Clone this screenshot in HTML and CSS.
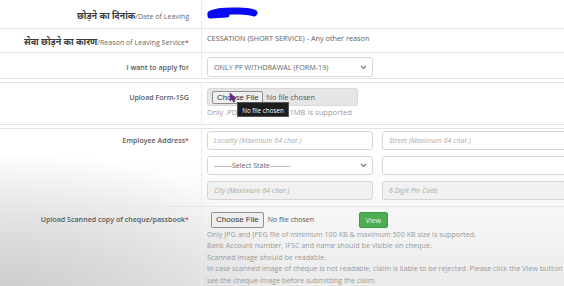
FILE: index.html
```html
<!DOCTYPE html>
<html lang="en">
<head>
<meta charset="utf-8">
<title>Claim Form</title>
<link rel="stylesheet" href="styles.css">
</head>
<body>
<div class="form">
  <div class="group g1">
    <div class="row r1">
      <div class="lbl"><span class="hi">छोड़ने का दिनांक</span><span class="en">/Date of Leaving</span></div>
      <div class="val">
        <svg class="scribble" width="52" height="14" viewBox="0 0 52 14"><path d="M4 8 C 12 4, 24 5, 32 5 C 38 5, 44 6, 47 7" stroke="#0a0af0" stroke-width="7" stroke-linecap="round" fill="none"/><path d="M3 10 L 20 9" stroke="#0a0af0" stroke-width="5" stroke-linecap="round"/></svg>
      </div>
    </div>
    <div class="row r2">
      <div class="lbl"><span class="hi">सेवा छोड़ने का कारण</span><span class="en">/Reason of Leaving Service</span><span class="req">*</span></div>
      <div class="val text">CESSATION (SHORT SERVICE) - Any other reason</div>
    </div>
    <div class="row r3">
      <div class="lbl">I want to apply for</div>
      <div class="val">
        <div class="select w1"><span>ONLY PF WITHDRAWAL (FORM-19)</span><svg class="chev" width="7" height="5" viewBox="0 0 7 5"><path d="M1 1 L3.5 3.5 L6 1" stroke="#777" stroke-width="1.1" fill="none"/></svg></div>
      </div>
    </div>
  </div>

  <div class="group g2">
    <div class="row r4">
      <div class="lbl">Upload Form-15G</div>
      <div class="val">
        <div class="filebox"><span class="fbtn small">Choose File</span><span class="fname">No file chosen</span></div>
        <div class="help h15">Only .PDF file less than 1MB is supported</div>
        <div class="tooltip">No file chosen</div>
        <svg class="cursor" width="8" height="11" viewBox="0 0 8 11"><path d="M1 1 L1 9 L3 7.2 L4.6 10.2 L6 9.5 L4.5 6.6 L7 6.4 Z" fill="#6b2d8c" stroke="#4a1d63" stroke-width="0.6"/></svg>
      </div>
    </div>
  </div>

  <div class="group g3">
    <div class="row r5">
      <div class="lbl">Employee Address<span class="req">*</span></div>
      <div class="val addr">
        <div class="input w1 ph">Locality (Maximum 64 char.)</div>
        <div class="input w2 ph">Street (Maximum 64 char.)</div>
        <div class="select w1"><span>--------Select State---------</span><svg class="chev" width="7" height="5" viewBox="0 0 7 5"><path d="M1 1 L3.5 3.5 L6 1" stroke="#777" stroke-width="1.1" fill="none"/></svg></div>
        <div class="input w2"></div>
        <div class="input w1 ph dis">City (Maximum 64 char.)</div>
        <div class="input w2 ph dis">6 Digit Pin Code</div>
      </div>
    </div>
    <div class="row r6">
      <div class="lbl">Upload Scanned copy of cheque/passbook<span class="req">*</span></div>
      <div class="val">
        <div class="fileline"><span class="fbtn">Choose File</span><span class="fname">No file chosen</span><span class="viewbtn">View</span></div>
        <div class="help lines">Only JPG and JPEG file of minimum 100 KB &amp; maximum 500 KB size is supported.<br>Bank Account number, IFSC and name should be visible on cheque.<br>Scanned image should be readable.<br>In case scanned image of cheque is not readable, claim is liable to be rejected. Please click the <span class="link">View</span> button to<br>see the cheque image before submitting the claim.</div>
      </div>
    </div>
  </div>
</div>
</body>
</html>
```
FILE: styles.css
```css
* { box-sizing: border-box; }
html, body { margin: 0; padding: 0; }
body {
  width: 564px;
  height: 286px;
  overflow: hidden;
  font-family: "Open Sans", "Noto Sans", sans-serif;
  color: #555;
  background:
    radial-gradient(ellipse 300px 150px at 0 300px, rgba(200,200,200,0.9), rgba(255,255,255,0) 100%),
    linear-gradient(#ffffff 55%, #ebebeb 100%);
}
.form { width: 660px; }
.group { border-bottom: 1px solid #e2e2e2; margin-bottom: 3px; }
.g2, .g3 { border-top: 1px solid #e2e2e2; }
.row {
  display: grid;
  grid-template-columns: 202px 1fr;
  border-bottom: 1px solid #e6e6e6;
}
.row:last-child { border-bottom: 0; }
.lbl {
  border-right: 1px solid #ececec;
  text-align: right;
  padding-right: 12px;
  font-size: 7.1px;
  font-weight: 600;
  color: #5a5a5a;
  white-space: nowrap;
}
.hi { font-family: "Noto Sans", "Noto Sans Devanagari", sans-serif; font-weight: 700; color: #3a3a3a; font-size: 9px; }
.en { font-weight: 500; color: #666; }
.req { color: #d9534f; }
.val { padding-left: 5px; position: relative; }

.r1 { height: 29px; }
.r1 .lbl { padding-top: 10px; line-height: 12px; }
.r1 .val { padding-top: 6px; }
.scribble { display: block; }

.r2 { height: 24px; }
.r2 .lbl { padding-top: 7px; line-height: 12px; }
.val.text { padding-top: 3px; line-height: 12px; font-size: 7.3px; color: #5d5d5d; }

.r3 { height: 25px; }
.r3 .lbl { padding-top: 4px; line-height: 20px; }
.r3 .val { padding-top: 4px; }

.select, .input {
  height: 19px;
  border: 1px solid #d6d6d6;
  border-radius: 3px;
  background: #fff;
  font-size: 7px;
  line-height: 17px;
  padding-left: 6px;
  white-space: nowrap;
  overflow: hidden;
}
.r3 .select { height: 20px; line-height: 18px; font-size: 7.2px; }
.select { display: flex; justify-content: space-between; align-items: center; padding-right: 5px; color: #666; }
.select span { line-height: 17px; }
.chev { flex: none; }
.w1 { width: 166px; }
.w2 { width: 200px; }
.ph { color: #aaa; font-style: italic; }
.dis { background: #f1f1f1; }

.r4 { height: 41px; }
.r4 .lbl { padding-top: 5px; line-height: 18px; }
.r4 .val { padding-top: 5px; }
.filebox {
  width: 151px;
  height: 18px;
  background: #e6e6e6;
  border: 1px solid #d8d8d8;
  border-radius: 3px;
  display: flex;
  align-items: center;
  padding-left: 4px;
  gap: 4px;
  font-size: 7.5px;
}
.fbtn {
  display: inline-block;
  border: 1px solid #8f8f8f;
  border-radius: 2px;
  background: #efefef;
  color: #333;
  font-size: 7.5px;
  height: 16px;
  line-height: 14px;
  padding: 0 4px;
  font-family: "Liberation Sans", Arial, sans-serif;
}
.fbtn.small { height: 13px; line-height: 11px; padding: 0 3px 0 4px; font-size: 7.8px; }
.fname { color: #555; font-size: 7.3px; font-family: "Open Sans", sans-serif; }
.help { font-size: 7.2px; color: #9a9a9a; line-height: 11px; margin-top: 1px; white-space: nowrap; }
.help.h15 { font-size: 7.6px; }
.tooltip {
  position: absolute;
  left: 35px;
  top: 19px;
  width: 52px;
  height: 15px;
  background: #1e1e1e;
  color: #fff;
  font-size: 6.3px;
  line-height: 15px;
  text-align: center;
  border: 1px solid #555;
}
.cursor { position: absolute; left: 27px; top: 9px; }

.r5 { height: 78px; }
.r5 .lbl { padding-top: 2px; line-height: 19px; }
.addr {
  padding-top: 2px;
  display: grid;
  grid-template-columns: 166px 200px;
  column-gap: 9px;
  row-gap: 6px;
  align-content: start;
}

.r6 .lbl { padding-top: 4px; line-height: 16px; }
.r6 .val { padding-top: 4px; }
.fileline { display: flex; align-items: center; padding-left: 4px; gap: 4px; height: 17px; }
.fileline .fbtn { height: 16px; line-height: 14px; font-size: 8px; }
.fileline .fname { width: 87px; font-size: 7px; }
.viewbtn {
  display: inline-block;
  background: #4cad52;
  color: #e9f6e9;
  font-size: 7px;
  height: 16px;
  line-height: 16px;
  width: 29px;
  text-align: center;
  border-radius: 2px;
  border: 1px solid #3f9b45;
}
.lines { line-height: 11.4px; margin-top: 1px; }
.link { color: #7aa3d0; font-weight: 400; }
```
